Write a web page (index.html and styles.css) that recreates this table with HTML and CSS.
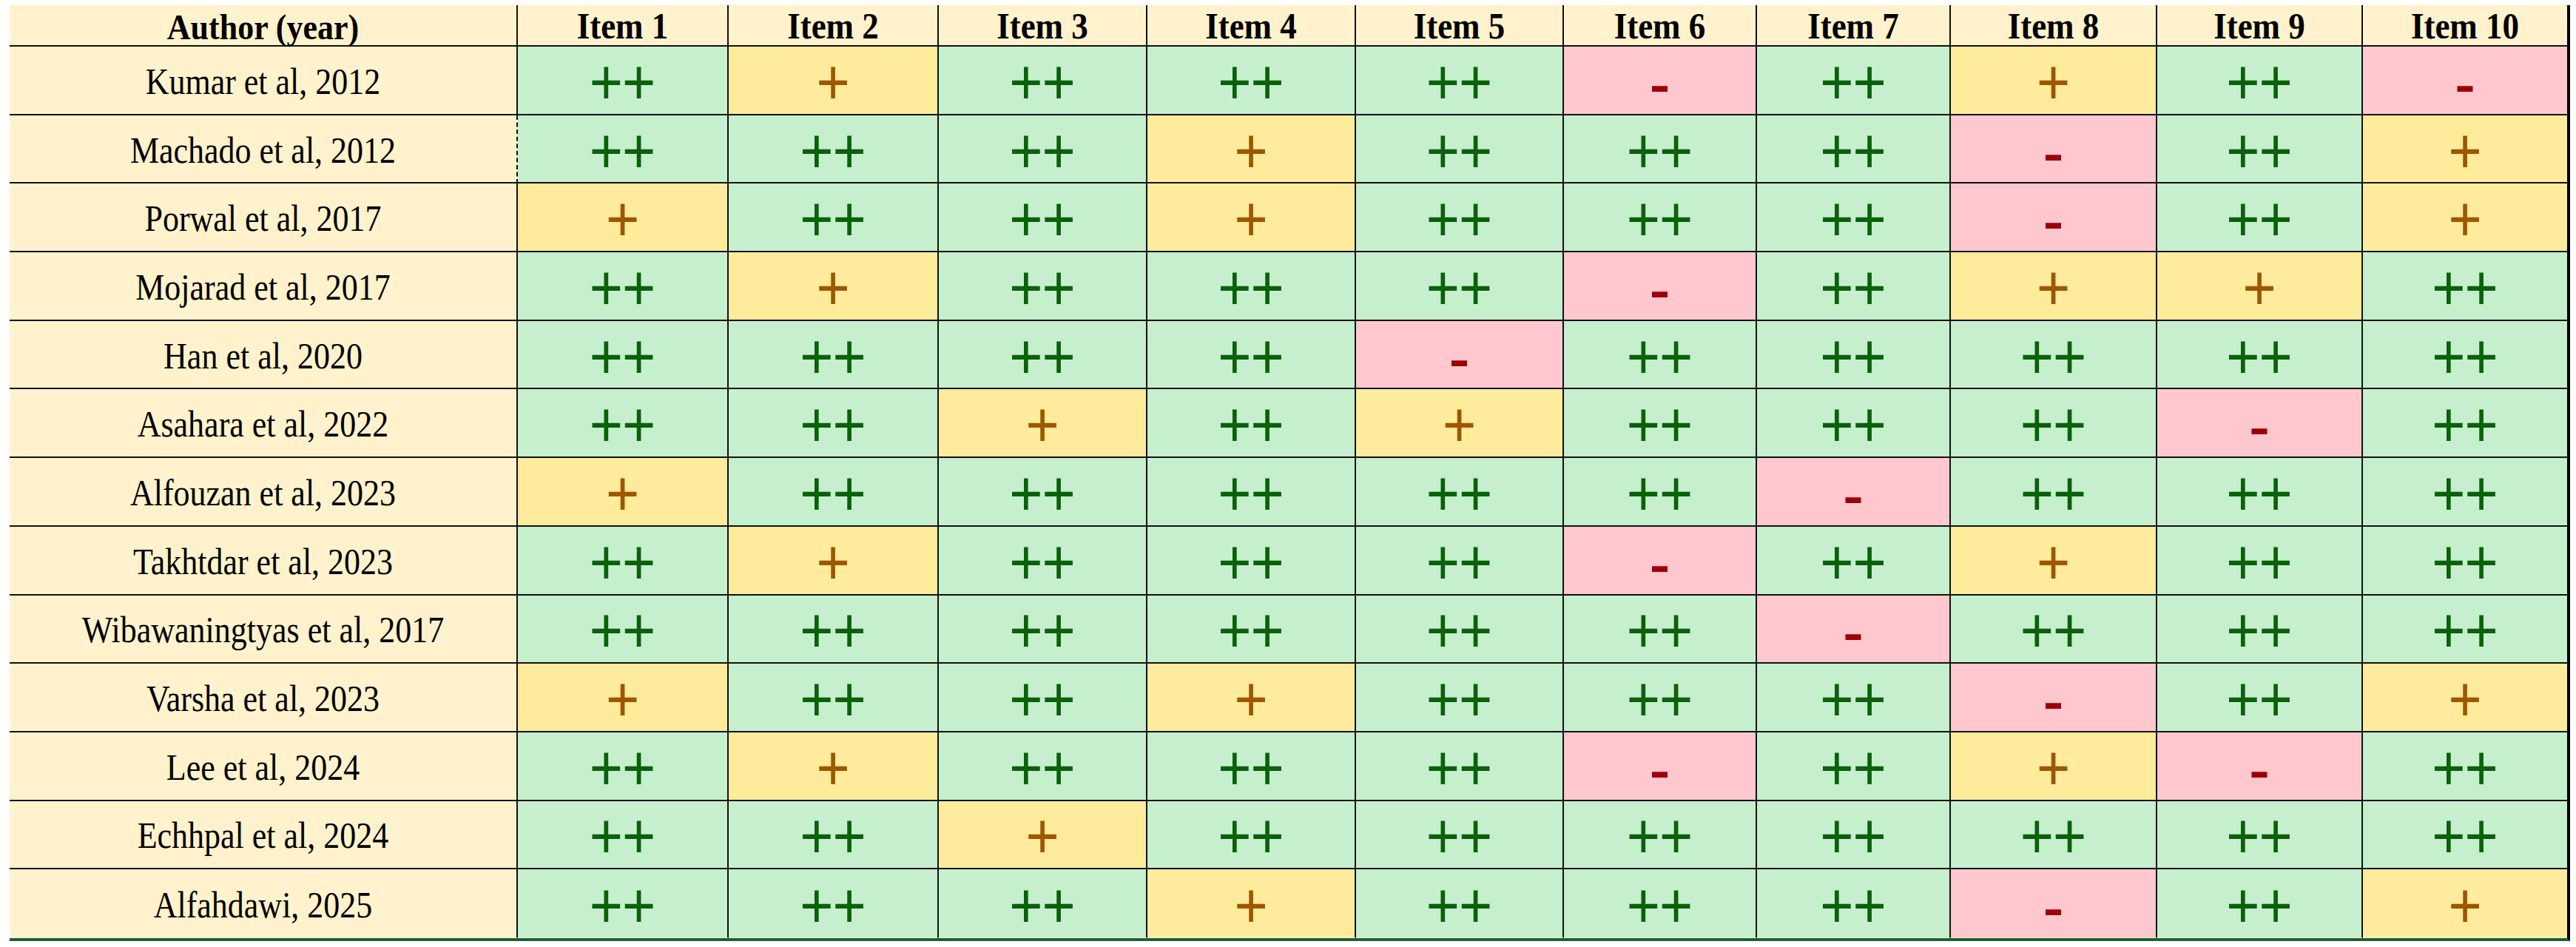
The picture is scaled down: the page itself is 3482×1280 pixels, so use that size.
FILE: index.html
```html
<!DOCTYPE html>
<html>
<head>
<meta charset="utf-8">
<link rel="stylesheet" href="styles.css">
</head>
<body>
<div class="table">
  <div class="c h a"><span>Author (year)</span></div><div class="c h"><span>Item 1</span></div><div class="c h"><span>Item 2</span></div><div class="c h"><span>Item 3</span></div><div class="c h"><span>Item 4</span></div><div class="c h"><span>Item 5</span></div><div class="c h"><span>Item 6</span></div><div class="c h"><span>Item 7</span></div><div class="c h"><span>Item 8</span></div><div class="c h"><span>Item 9</span></div><div class="c h last"><span>Item 10</span></div>

  <div class="c a"><span>Kumar et al, 2012</span></div><div class="c g"><span>++</span></div><div class="c y"><span>+</span></div><div class="c g"><span>++</span></div><div class="c g"><span>++</span></div><div class="c g"><span>++</span></div><div class="c r"><span>-</span></div><div class="c g"><span>++</span></div><div class="c y"><span>+</span></div><div class="c g"><span>++</span></div><div class="c r last"><span>-</span></div>

  <div class="c a dash"><span>Machado et al, 2012</span></div><div class="c g"><span>++</span></div><div class="c g"><span>++</span></div><div class="c g"><span>++</span></div><div class="c y"><span>+</span></div><div class="c g"><span>++</span></div><div class="c g"><span>++</span></div><div class="c g"><span>++</span></div><div class="c r"><span>-</span></div><div class="c g"><span>++</span></div><div class="c y last"><span>+</span></div>

  <div class="c a"><span>Porwal et al, 2017</span></div><div class="c y"><span>+</span></div><div class="c g"><span>++</span></div><div class="c g"><span>++</span></div><div class="c y"><span>+</span></div><div class="c g"><span>++</span></div><div class="c g"><span>++</span></div><div class="c g"><span>++</span></div><div class="c r"><span>-</span></div><div class="c g"><span>++</span></div><div class="c y last"><span>+</span></div>

  <div class="c a"><span>Mojarad et al, 2017</span></div><div class="c g"><span>++</span></div><div class="c y"><span>+</span></div><div class="c g"><span>++</span></div><div class="c g"><span>++</span></div><div class="c g"><span>++</span></div><div class="c r"><span>-</span></div><div class="c g"><span>++</span></div><div class="c y"><span>+</span></div><div class="c y"><span>+</span></div><div class="c g last"><span>++</span></div>

  <div class="c a"><span>Han et al, 2020</span></div><div class="c g"><span>++</span></div><div class="c g"><span>++</span></div><div class="c g"><span>++</span></div><div class="c g"><span>++</span></div><div class="c r"><span>-</span></div><div class="c g"><span>++</span></div><div class="c g"><span>++</span></div><div class="c g"><span>++</span></div><div class="c g"><span>++</span></div><div class="c g last"><span>++</span></div>

  <div class="c a"><span>Asahara et al, 2022</span></div><div class="c g"><span>++</span></div><div class="c g"><span>++</span></div><div class="c y"><span>+</span></div><div class="c g"><span>++</span></div><div class="c y"><span>+</span></div><div class="c g"><span>++</span></div><div class="c g"><span>++</span></div><div class="c g"><span>++</span></div><div class="c r"><span>-</span></div><div class="c g last"><span>++</span></div>

  <div class="c a"><span>Alfouzan et al, 2023</span></div><div class="c y"><span>+</span></div><div class="c g"><span>++</span></div><div class="c g"><span>++</span></div><div class="c g"><span>++</span></div><div class="c g"><span>++</span></div><div class="c g"><span>++</span></div><div class="c r"><span>-</span></div><div class="c g"><span>++</span></div><div class="c g"><span>++</span></div><div class="c g last"><span>++</span></div>

  <div class="c a"><span>Takhtdar et al, 2023</span></div><div class="c g"><span>++</span></div><div class="c y"><span>+</span></div><div class="c g"><span>++</span></div><div class="c g"><span>++</span></div><div class="c g"><span>++</span></div><div class="c r"><span>-</span></div><div class="c g"><span>++</span></div><div class="c y"><span>+</span></div><div class="c g"><span>++</span></div><div class="c g last"><span>++</span></div>

  <div class="c a"><span>Wibawaningtyas et al, 2017</span></div><div class="c g"><span>++</span></div><div class="c g"><span>++</span></div><div class="c g"><span>++</span></div><div class="c g"><span>++</span></div><div class="c g"><span>++</span></div><div class="c g"><span>++</span></div><div class="c r"><span>-</span></div><div class="c g"><span>++</span></div><div class="c g"><span>++</span></div><div class="c g last"><span>++</span></div>

  <div class="c a"><span>Varsha et al, 2023</span></div><div class="c y"><span>+</span></div><div class="c g"><span>++</span></div><div class="c g"><span>++</span></div><div class="c y"><span>+</span></div><div class="c g"><span>++</span></div><div class="c g"><span>++</span></div><div class="c g"><span>++</span></div><div class="c r"><span>-</span></div><div class="c g"><span>++</span></div><div class="c y last"><span>+</span></div>

  <div class="c a"><span>Lee et al, 2024</span></div><div class="c g"><span>++</span></div><div class="c y"><span>+</span></div><div class="c g"><span>++</span></div><div class="c g"><span>++</span></div><div class="c g"><span>++</span></div><div class="c r"><span>-</span></div><div class="c g"><span>++</span></div><div class="c y"><span>+</span></div><div class="c r"><span>-</span></div><div class="c g last"><span>++</span></div>

  <div class="c a"><span>Echhpal et al, 2024</span></div><div class="c g"><span>++</span></div><div class="c g"><span>++</span></div><div class="c y"><span>+</span></div><div class="c g"><span>++</span></div><div class="c g"><span>++</span></div><div class="c g"><span>++</span></div><div class="c g"><span>++</span></div><div class="c g"><span>++</span></div><div class="c g"><span>++</span></div><div class="c g last"><span>++</span></div>

  <div class="c a bottom"><span>Alfahdawi, 2025</span></div><div class="c g bottom"><span>++</span></div><div class="c g bottom"><span>++</span></div><div class="c g bottom"><span>++</span></div><div class="c y bottom"><span>+</span></div><div class="c g bottom"><span>++</span></div><div class="c g bottom"><span>++</span></div><div class="c g bottom"><span>++</span></div><div class="c r bottom"><span>-</span></div><div class="c g bottom"><span>++</span></div><div class="c y bottom last"><span>+</span></div>
</div>
</body>
</html>
```

FILE: styles.css
```css
html, body {
  margin: 0;
  padding: 0;
  background: #ffffff;
}

body {
  padding: 7px 0 0 13px;
}

.table {
  display: grid;
  grid-template-columns: 687px 285px 284px 282px 282px 281px 261px 262px 279px 278px 276px;
  grid-template-rows: 56px repeat(13, 92.7px);
  width: 3457px;
  border-right: 4px solid #000000;
  border-bottom: 4px solid #1f5f33;
  font-family: "Liberation Serif", "Times New Roman", serif;
}

.c {
  display: flex;
  align-items: center;
  justify-content: center;
  border-right: 2px solid #111111;
  border-bottom: 2px solid #111111;
  box-sizing: border-box;
}

.c > span {
  display: inline-block;
  transform: scaleY(1.12);
}

.c.last {
  border-right: none;
}

.c.bottom {
  border-bottom: 1px solid #fdf6d8;
}

.h {
  background: #fff2cc;
  font-weight: bold;
  font-size: 45px;
  color: #000000;
  padding-top: 2px;
}

.a {
  background: #fff2cc;
  font-size: 44px;
  color: #000000;
  padding-top: 4px;
}

.a:not(.h) > span {
  transform: scaleY(1.16);
}

.a.dash {
  border-right-style: dashed;
}

.g, .y, .r {
  font-family: "Liberation Serif", "Times New Roman", serif;
  font-weight: bold;
  font-size: 81px;
  line-height: 1;
  padding-top: 8px;
}

.g {
  background: #c6efce;
  color: #0a610a;
  letter-spacing: -2px;
  text-indent: -2px;
}

.y {
  background: #ffeb9c;
  color: #9c5700;
}

.r {
  background: #ffc7ce;
  color: #9c0006;
}
```
